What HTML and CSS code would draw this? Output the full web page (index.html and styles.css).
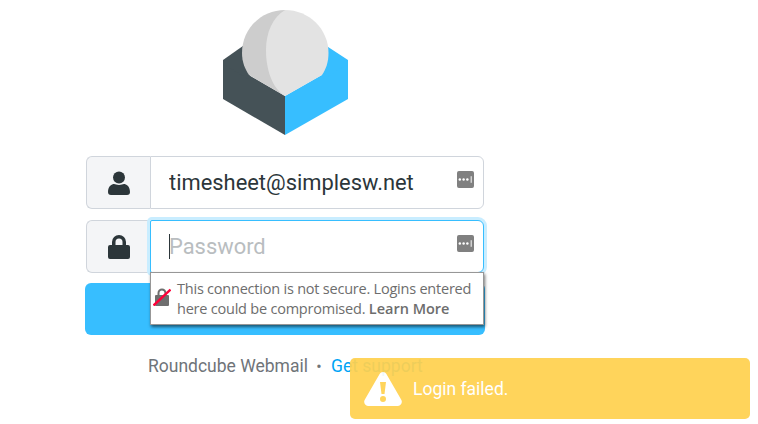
FILE: index.html
```html
<!DOCTYPE html>
<html lang="en">
<head>
<meta charset="utf-8">
<title>Roundcube Webmail</title>
<link rel="stylesheet" href="styles.css">
</head>
<body>
<main class="page">
  <div class="logo-row">
    <svg class="logo" width="126" height="126" viewBox="222 9 126 126" aria-label="Roundcube">
      <path fill="#37beff" d="M285 96 L348 60 V99 L285 135Z"/>
      <path fill="#37beff" d="M322 43 L348 60 V64 L322 80Z"/>
      <path fill="#455257" d="M285 96 L223 60 V99 L285 135Z"/>
      <path fill="#455257" d="M250 41 L223 60 V64 L250 80Z"/>
      <path fill="#cdcdcd" d="M285 10 C261 10 242 29 242 53 C242 62 245 69 249 75 L285 96Z"/>
      <path fill="#e3e3e3" d="M285 10 C309 10 328.500 29 328.500 53 C328.500 62 326 69 322 75 L285 96 C273 89 266 71 266 50 C266 32 273 17 285 10Z"/>
    </svg>
  </div>
  <form class="login">
    <div class="group">
      <span class="addon">
        <svg width="22" height="24" viewBox="0 0 22 24"><circle cx="11" cy="6.500" r="6"/><path d="M0 21c0-6 4-8 6-8 1.500 0 2.500 1 5 1s3.500-1 5-1c2 0 6 2 6 8 0 2-1 3-3 3H3c-2 0-3-1-3-3z"/></svg>
      </span>
      <span class="field">
        <input class="control" type="text" value="timesheet@simplesw.net" aria-label="Username">
        <svg class="pm" width="17" height="17" viewBox="0 0 18 18"><rect width="18" height="18" rx="2" fill="#808080"/><g fill="#fff"><circle cx="3" cy="9" r="1.300"/><circle cx="7" cy="9" r="1.300"/><circle cx="11" cy="9" r="1.300"/><rect x="14.500" y="5.500" width="1" height="7"/></g></svg>
      </span>
    </div>
    <div class="group">
      <span class="addon">
        <svg width="22" height="24" viewBox="0 0 22 24"><path d="M2 10h2V7a7 7 0 0 1 14 0v3h2a2 2 0 0 1 2 2v10a2 2 0 0 1-2 2H2a2 2 0 0 1-2-2V12a2 2 0 0 1 2-2zM7.500 10h7V7a3.500 3.500 0 0 0-7 0z"/></svg>
      </span>
      <span class="field focused">
        <input class="control" type="text" placeholder="Password" aria-label="Password">
        <i class="caret"></i>
        <svg class="pm" width="17" height="17" viewBox="0 0 18 18"><rect width="18" height="18" rx="2" fill="#808080"/><g fill="#fff"><circle cx="3" cy="9" r="1.300"/><circle cx="7" cy="9" r="1.300"/><circle cx="11" cy="9" r="1.300"/><rect x="14.500" y="5.500" width="1" height="7"/></g></svg>
        <div class="warning">
          <svg class="warn-icon" width="18" height="18" viewBox="0 0 18 18">
            <path fill="#6f6f6f" d="M3 7h1.500V5a4.500 4.500 0 0 1 9 0v2H15a1 1 0 0 1 1 1v9a1 1 0 0 1-1 1H3a1 1 0 0 1-1-1V8a1 1 0 0 1 1-1zM6.500 7h5V5a2.500 2.500 0 0 0-5 0z"/>
            <path stroke="#ff0039" stroke-width="2.400" d="M0.500 17.500 L17.500 1.500"/>
          </svg>
          <p class="warn-text">This connection is not secure. Logins entered here could be compromised. <b>Learn More</b></p>
        </div>
      </span>
    </div>
    <button class="submit" type="button" aria-label="Login"></button>
  </form>
  <p class="foot">Roundcube Webmail <span class="dot">•</span> <a href="#">Get support</a></p>
  <div class="toast">
    <svg width="38" height="34" viewBox="0 0 38 34"><path fill="#fff" fill-rule="evenodd" d="M19 0c1.500 0 2.700.8 3.400 2l15 26c1.300 2.500-.4 6-3.400 6H4c-3 0-4.700-3.500-3.400-6l15-26C16.300.8 17.500 0 19 0zM16 10l1.500 12h3L22 10zM19 24a3 3 0 1 0 0 6 3 3 0 0 0 0-6z"/></svg>
    <span>Login failed.</span>
  </div>
</main>
</body>
</html>
```

FILE: styles.css
```css
* { box-sizing: border-box; }
html, body { margin: 0; height: 100%; overflow: hidden; background: #fff; }
body { font-family: Roboto, "Liberation Sans", sans-serif; color: #2c363a; }
.page { position: relative; width: 758px; height: 424px; padding-top: 9px; }
.logo-row { display: flex; padding-left: 222px; height: 147px; }
.logo { display: block; }
.login { width: 400px; margin-left: 85px; display: flex; flex-direction: column; }
.group { display: flex; height: 53px; margin: 0 1px 11px; }
.addon { width: 64px; display: flex; align-items: center; justify-content: center; background: #f4f5f7; border: 1px solid #d0d5dc; border-right: 0; border-radius: 6px 0 0 6px; }
.addon svg { fill: #2c363a; display: block; }
.field { position: relative; flex: 1; display: flex; align-items: center; background: #fff; border: 1px solid #d0d5dc; border-radius: 0 6px 6px 0; }
.field.focused { border-color: #37beff; box-shadow: 0 0 0 3px #c9edff; border-radius: 2px 6px 6px 2px; }
.control { width: 100%; height: 100%; border: 0; outline: 0; padding: 0 40px 0 18px; background: transparent; font: 21.900px Roboto, "Liberation Sans", sans-serif; color: #2c363a; }
.control::placeholder { color: #b9bdc0; opacity: 1; }
.caret { position: absolute; left: 18px; top: 13px; width: 1px; height: 25px; background: #2c363a; }
.pm { position: absolute; right: 9px; top: 14px; }
.warning { position: absolute; left: -1px; top: 51px; width: 334px; height: 53px; display: flex; gap: 6px; padding: 6px 4px 0 2px; background: #fff; border: 1px solid #979797; box-shadow: 1px 2px 3px rgba(0, 0, 0, 0.55); }
.warn-icon { flex: none; margin-top: 9px; }
.warn-text { margin: 0; font: 14.500px/20px "Open Sans", "Noto Sans", sans-serif; color: #6d6d6d; letter-spacing: -0.22px; }
.warn-text b { font-weight: 600; letter-spacing: 0; }
.submit { height: 52px; margin-top: -1px; border: 0; border-radius: 6px; background: #37beff; }
.foot { margin: 21px 0 0 148px; font-size: 17.500px; line-height: 20px; color: #6f7479; }
.foot a { color: #00a4f5; text-decoration: none; }
.dot { margin: 0 5px 0 4px; font-size: 16px; }
.toast { position: absolute; left: 350px; top: 358px; width: 400px; height: 61px; display: flex; align-items: center; gap: 11px; padding-left: 14px; background: #ffd14f; opacity: 0.93; border-radius: 5px; color: #fff; font-size: 17.500px; }
```
